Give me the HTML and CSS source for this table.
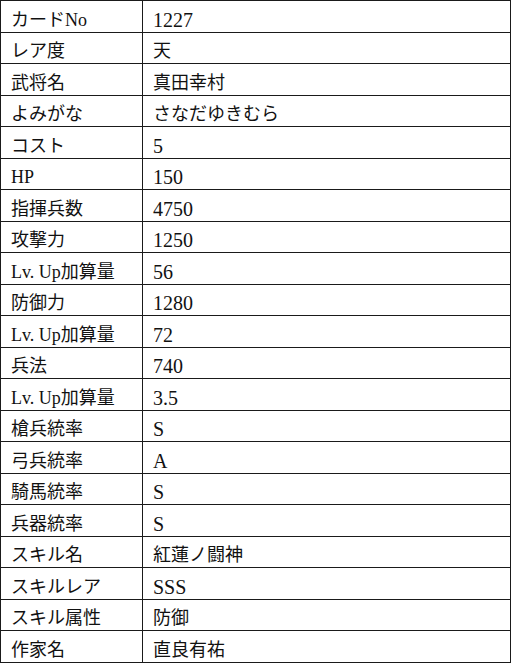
FILE: index.html
```html
<!DOCTYPE html>
<html lang="ja">
<head>
<meta charset="utf-8">
<link rel="stylesheet" href="styles.css">
</head>
<body>
<table class="card">
<tbody>
<tr><td class="k">カードNo</td><td class="v lat">1227</td></tr>
<tr><td class="k">レア度</td><td class="v">天</td></tr>
<tr><td class="k">武将名</td><td class="v">真田幸村</td></tr>
<tr><td class="k">よみがな</td><td class="v">さなだゆきむら</td></tr>
<tr><td class="k">コスト</td><td class="v lat">5</td></tr>
<tr><td class="k">HP</td><td class="v lat">150</td></tr>
<tr><td class="k">指揮兵数</td><td class="v lat">4750</td></tr>
<tr><td class="k">攻撃力</td><td class="v lat">1250</td></tr>
<tr><td class="k">Lv. Up加算量</td><td class="v lat">56</td></tr>
<tr><td class="k">防御力</td><td class="v lat">1280</td></tr>
<tr><td class="k">Lv. Up加算量</td><td class="v lat">72</td></tr>
<tr><td class="k">兵法</td><td class="v lat">740</td></tr>
<tr><td class="k">Lv. Up加算量</td><td class="v lat">3.5</td></tr>
<tr><td class="k">槍兵統率</td><td class="v lat">S</td></tr>
<tr><td class="k">弓兵統率</td><td class="v lat">A</td></tr>
<tr><td class="k">騎馬統率</td><td class="v lat">S</td></tr>
<tr><td class="k">兵器統率</td><td class="v lat">S</td></tr>
<tr><td class="k">スキル名</td><td class="v">紅蓮ノ闘神</td></tr>
<tr><td class="k">スキルレア</td><td class="v lat">SSS</td></tr>
<tr><td class="k">スキル属性</td><td class="v">防御</td></tr>
<tr><td class="k">作家名</td><td class="v">直良有祐</td></tr>
</tbody>
</table>
</body>
</html>
```
FILE: styles.css
```css
html, body {
  margin: 0;
  padding: 0;
  background: #fff;
}
.card {
  border-collapse: collapse;
  width: 511px;
  table-layout: fixed;
  font-family: "Liberation Serif", "Noto Sans CJK JP", serif;
  font-size: 18px;
  color: #111;
}
.card tr {
  height: 31.5px;
}
.card td {
  border: 1px solid #1a1a1a;
  padding: 7px 0 0 10px;
  line-height: 20px;
  vertical-align: middle;
  white-space: nowrap;
}
.card td.k {
  width: 131px;
}
.card td.v {
  padding-left: 10px;
}
.card td.lat {
  font-size: 20px;
}
```
